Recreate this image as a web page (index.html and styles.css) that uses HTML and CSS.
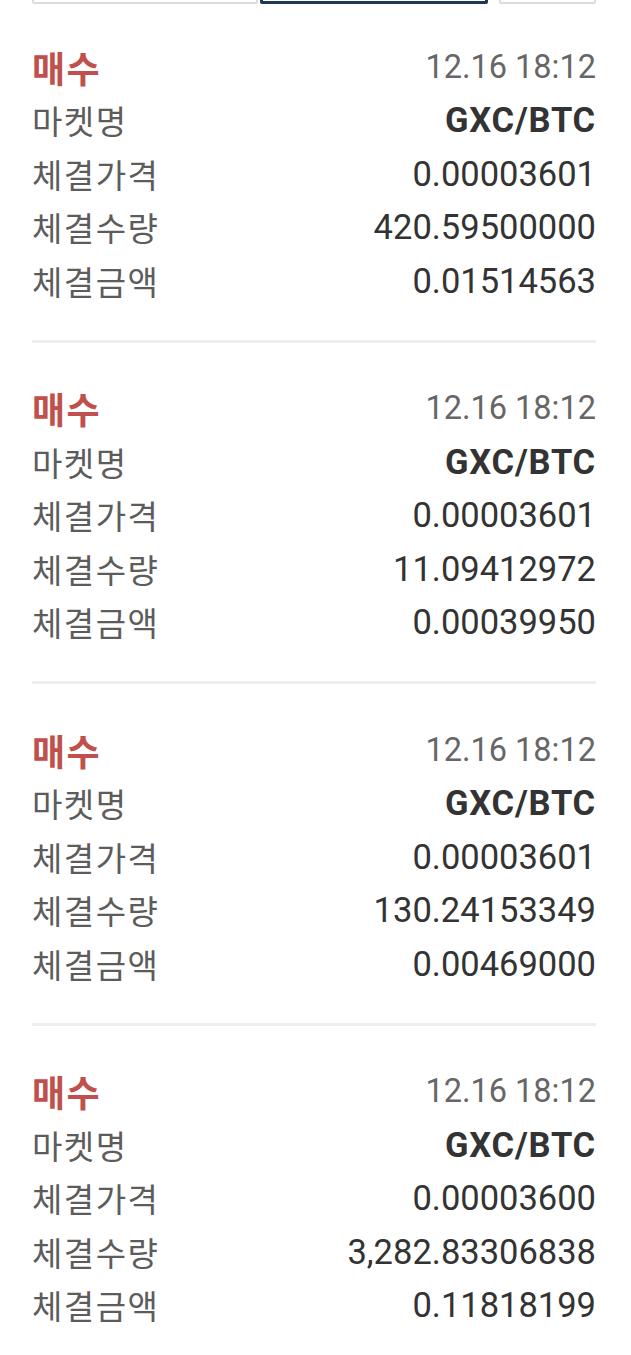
FILE: index.html
```html
<!DOCTYPE html>
<html lang="ko">
<head>
<meta charset="utf-8">
<link rel="stylesheet" href="styles.css">
</head>
<body>
<div class="tabs">
  <div class="tab tab-wide"></div>
  <div class="tab tab-wide tab-active"></div>
  <div class="tab tab-small"></div>
</div>
<div class="list">
  <section class="card">
    <div class="row head"><span class="side">매수</span><span class="time">12.16 18:12</span></div>
    <div class="row"><span class="label">마켓명</span><span class="value market">GXC/BTC</span></div>
    <div class="row"><span class="label">체결가격</span><span class="value">0.00003601</span></div>
    <div class="row"><span class="label">체결수량</span><span class="value">420.59500000</span></div>
    <div class="row"><span class="label">체결금액</span><span class="value">0.01514563</span></div>
  </section>
  <section class="card">
    <div class="row head"><span class="side">매수</span><span class="time">12.16 18:12</span></div>
    <div class="row"><span class="label">마켓명</span><span class="value market">GXC/BTC</span></div>
    <div class="row"><span class="label">체결가격</span><span class="value">0.00003601</span></div>
    <div class="row"><span class="label">체결수량</span><span class="value">11.09412972</span></div>
    <div class="row"><span class="label">체결금액</span><span class="value">0.00039950</span></div>
  </section>
  <section class="card">
    <div class="row head"><span class="side">매수</span><span class="time">12.16 18:12</span></div>
    <div class="row"><span class="label">마켓명</span><span class="value market">GXC/BTC</span></div>
    <div class="row"><span class="label">체결가격</span><span class="value">0.00003601</span></div>
    <div class="row"><span class="label">체결수량</span><span class="value">130.24153349</span></div>
    <div class="row"><span class="label">체결금액</span><span class="value">0.00469000</span></div>
  </section>
  <section class="card">
    <div class="row head"><span class="side">매수</span><span class="time">12.16 18:12</span></div>
    <div class="row"><span class="label">마켓명</span><span class="value market">GXC/BTC</span></div>
    <div class="row"><span class="label">체결가격</span><span class="value">0.00003600</span></div>
    <div class="row"><span class="label">체결수량</span><span class="value">3,282.83306838</span></div>
    <div class="row"><span class="label">체결금액</span><span class="value">0.11818199</span></div>
  </section>
</div>
</body>
</html>
```

FILE: styles.css
```css
* { box-sizing: border-box; }
html, body { margin: 0; padding: 0; background: #fff; }
body {
  width: 631px;
  font-family: Roboto, "Noto Sans CJK KR", sans-serif;
  overflow: hidden;
}
.tabs {
  display: flex;
  margin: -40px 35px -3px 32px;
  height: 44px;
}
.tab {
  height: 44px;
  border: 2px solid #dcdcdc;
  border-radius: 0 0 2px 2px;
}
.tab-wide { width: 226px; }
.tab-active {
  width: 229px;
  margin-left: 2px;
  border: 3px solid #1d3856;
}
.tab-small {
  width: 97px;
  margin-left: 11px;
}
.list { display: flex; flex-direction: column; }
.card {
  margin: 0 35px 0 32px;
  padding: 39px 0 32px;
  border-bottom: 3px solid #eeeeee;
}
.card:last-child { border-bottom: none; }
.row {
  display: flex;
  justify-content: space-between;
  align-items: center;
  height: 53.5px;
}
.side {
  font-family: "Noto Sans CJK KR", sans-serif;
  font-weight: 700;
  font-size: 36px;
  color: #c0504b;
  letter-spacing: 1.5px;
}
.time {
  font-family: Roboto, sans-serif;
  font-size: 32.5px;
  color: #666666;
}
.label {
  font-family: "Noto Sans CJK KR", sans-serif;
  font-size: 33px;
  color: #5c5c5c;
  letter-spacing: 1.5px;
}
.value {
  font-family: Roboto, sans-serif;
  font-size: 34.5px;
  color: #333333;
}
.market { font-weight: 700; letter-spacing: 0.8px; }
```
